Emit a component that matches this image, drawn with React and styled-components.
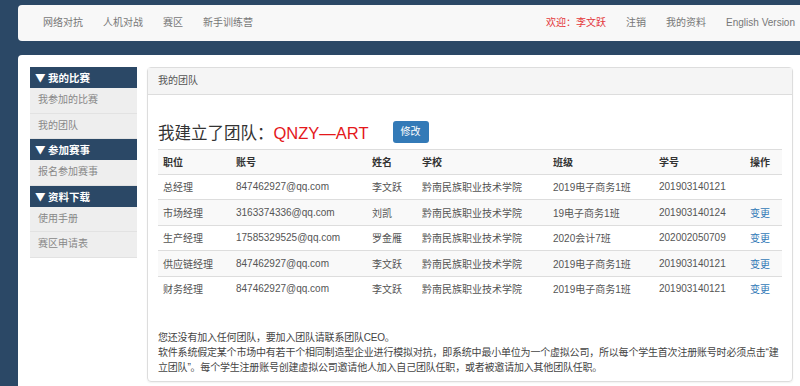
import styled, { createGlobalStyle } from "styled-components";

const GlobalStyle = createGlobalStyle`
  html, body {
    margin: 0;
    padding: 0;
    overflow: hidden;
    background: #2b4866;
    font-family: "Liberation Sans", "Noto Sans CJK SC", sans-serif;
    font-size: 10px;
    color: #333;
  }
`;

const rows = [
  ["总经理", "847462927@qq.com", "李文跃", "黔南民族职业技术学院", "2019电子商务1班", "201903140121", ""],
  ["市场经理", "3163374336@qq.com", "刘凯", "黔南民族职业技术学院", "19电子商务1班", "201903140124", "变更"],
  ["生产经理", "17585329525@qq.com", "罗金雁", "黔南民族职业技术学院", "2020会计7班", "202002050709", "变更"],
  ["供应链经理", "847462927@qq.com", "李文跃", "黔南民族职业技术学院", "2019电子商务1班", "201903140121", "变更"],
  ["财务经理", "847462927@qq.com", "李文跃", "黔南民族职业技术学院", "2019电子商务1班", "201903140121", "变更"],
];

const columns = [
  { label: "职位", width: 73 },
  { label: "账号", width: 136 },
  { label: "姓名", width: 50 },
  { label: "学校", width: 131 },
  { label: "班级", width: 106 },
  { label: "学号", width: 91 },
  { label: "操作" },
];

const menu = [
  { title: "我的比赛", items: ["我参加的比赛", "我的团队"] },
  { title: "参加赛事", items: ["报名参加赛事"] },
  { title: "资料下载", items: ["使用手册", "赛区申请表"] },
];

const App = () => {
  return (
    <>
      <GlobalStyle />
      <Page>
        <NavBar>
          <NavGroup>
            <NavLink>网络对抗</NavLink>
            <NavLink>人机对战</NavLink>
            <NavLink>赛区</NavLink>
            <NavLink>新手训练营</NavLink>
          </NavGroup>
          <NavGroup>
            <NavLink $red>欢迎：李文跃</NavLink>
            <NavLink>注销</NavLink>
            <NavLink>我的资料</NavLink>
            <NavLink>English Version</NavLink>
          </NavGroup>
        </NavBar>
        <Main>
          <Sidebar>
            {menu.map((group) => (
              <div key={group.title}>
                <SideHead>▼ {group.title}</SideHead>
                {group.items.map((item) => (
                  <SideItem key={item}>{item}</SideItem>
                ))}
              </div>
            ))}
          </Sidebar>
          <Panel>
            <PanelHead>我的团队</PanelHead>
            <PanelBody>
              <TitleRow>
                <Title>
                  我建立了团队：<TeamName>QNZY—ART</TeamName>
                </Title>
                <EditButton>修改</EditButton>
              </TitleRow>
              <Table>
                <tbody>
                  <tr>
                    {columns.map((c) => (
                      <Th key={c.label} $w={c.width}>
                        {c.label}
                      </Th>
                    ))}
                  </tr>
                  {rows.map((r, i) => (
                    <tr key={i}>
                      {r.slice(0, 6).map((c, j) => (
                        <Td key={j}>{c}</Td>
                      ))}
                      <Td>
                        <Action>{r[6]}</Action>
                      </Td>
                    </tr>
                  ))}
                </tbody>
              </Table>
              <Note>
                您还没有加入任何团队，要加入团队请联系团队CEO。
                <br />
                软件系统假定某个市场中有若干个相同制造型企业进行模拟对抗，即系统中最小单位为一个虚拟公司，所以每个学生首次注册账号时必须点击“建立团队”。每个学生注册账号创建虚拟公司邀请他人加入自己团队任职，或者被邀请加入其他团队任职。
              </Note>
            </PanelBody>
          </Panel>
        </Main>
      </Page>
    </>
  );
};

const Page = styled.div`
  width: 787px;
  padding: 5px 0 0 18px;
  height: 381px;
  overflow: hidden;
`;

const NavBar = styled.div`
  display: flex;
  justify-content: space-between;
  align-items: center;
  height: 36px;
  background: #f8f8f8;
  border-radius: 4px;
  padding: 0 0 0 15px;
`;

const NavGroup = styled.div`
  display: flex;
`;

const NavLink = styled.span`
  padding: 0 10px;
  font-size: 10px;
  line-height: 36px;
  color: ${(p) => (p.$red ? "#e4393c" : "#777")};
  white-space: nowrap;
`;

const Main = styled.div`
  margin-top: 14px;
  background: #fff;
  border-radius: 4px 4px 0 0;
  padding: 12px;
  display: flex;
  gap: 10px;
  align-items: flex-start;
  height: 400px;
`;

const Sidebar = styled.div`
  width: 107px;
  flex-shrink: 0;
`;

const SideHead = styled.div`
  height: 21px;
  line-height: 21px;
  background: #2b4866;
  color: #fff;
  font-weight: bold;
  font-size: 10.5px;
  padding-left: 5px;
  font-family: "Noto Sans CJK SC", serif;
`;

const SideItem = styled.div`
  height: 24.5px;
  line-height: 24.5px;
  background: #eee;
  color: #888;
  font-size: 10px;
  padding-left: 8px;
  border-bottom: 1px solid #e2e2e2;
`;

const Panel = styled.div`
  flex: 1;
  border: 1px solid #ddd;
  border-radius: 4px;
  box-shadow: 0 1px 2px rgba(0, 0, 0, 0.06);
  height: 313px;
`;

const PanelHead = styled.div`
  height: 26px;
  line-height: 26px;
  background: #f5f5f5;
  border-bottom: 1px solid #ddd;
  padding-left: 10px;
  font-size: 10px;
  color: #555;
`;

const PanelBody = styled.div`
  padding: 25px 10px 0 10px;
`;

const TitleRow = styled.div`
  display: flex;
  align-items: center;
  gap: 24px;
  height: 24px;
  margin-bottom: 5px;
`;

const Title = styled.div`
  font-size: 16.5px;
  color: #333;
`;

const TeamName = styled.span`
  color: #e4181b;
`;

const EditButton = styled.div`
  background: #337ab7;
  color: #fff;
  font-size: 10px;
  border-radius: 3px;
  width: 36px;
  height: 22px;
  line-height: 22px;
  text-align: center;
`;

const Table = styled.table`
  width: 100%;
  table-layout: fixed;
  border-collapse: collapse;
  tr:nth-of-type(odd) {
    background: #f9f9f9;
  }
`;

const Th = styled.th`
  box-sizing: border-box;
  width: ${(p) => (p.$w ? `${p.$w}px` : "auto")};
  text-align: left;
  font-weight: bold;
  font-size: 10px;
  height: 24.5px;
  padding: 0 5px;
  border-top: 1px solid #ddd;
  color: #333;
`;

const Td = styled.td`
  height: 24.5px;
  padding: 0 5px;
  border-top: 1px solid #ddd;
  font-size: 10px;
  color: #555;
  white-space: nowrap;
`;

const Action = styled.span`
  color: #337ab7;
`;

const Note = styled.div`
  margin-top: 29px;
  font-size: 10px;
  line-height: 15px;
  letter-spacing: -0.2px;
  color: #444;
`;

export default App;
